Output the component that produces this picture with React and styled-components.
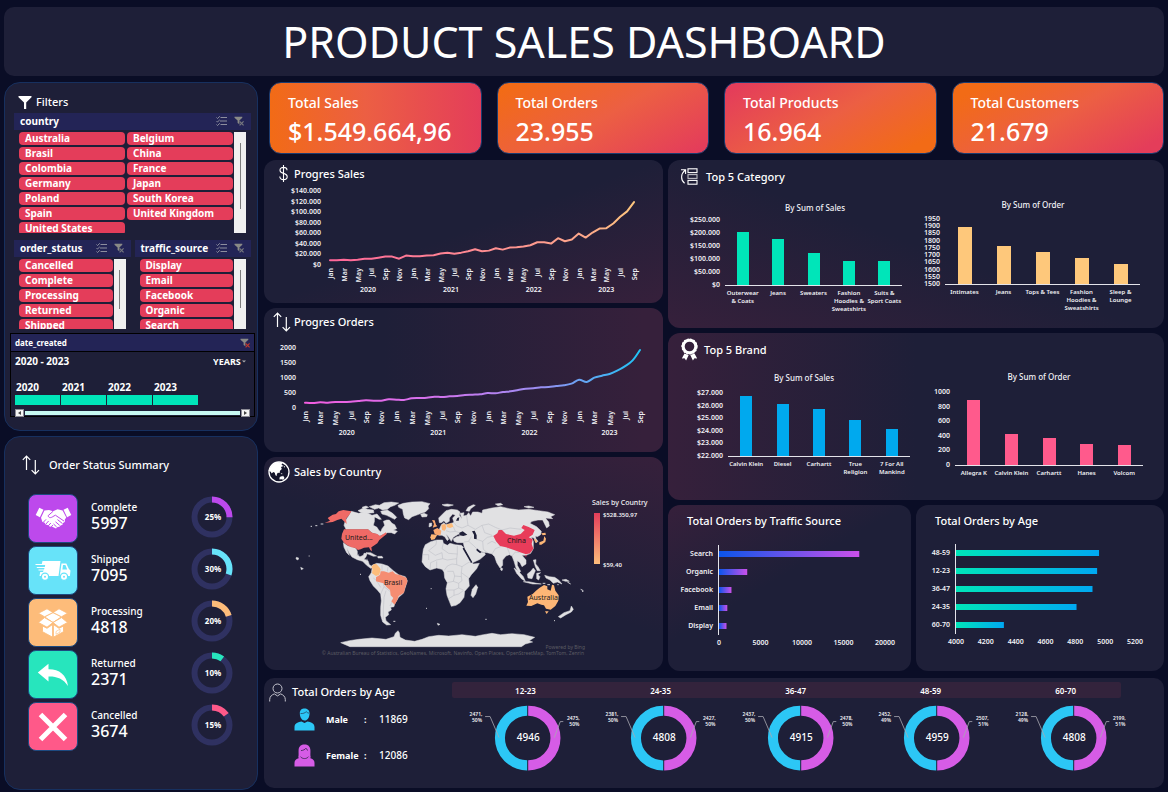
import React from "react";
import styled, { createGlobalStyle } from "styled-components";

const FONT = '"Noto Sans", "Open Sans", sans-serif';
const PANEL = "#1e1f38";
const PLUM = "#36203b";
const NAVY = "#232456";
const RED = "#e43d5a";

const GlobalStyle = createGlobalStyle`
  * { box-sizing: border-box; }
  body { margin: 0; background: #0a0d26; color: #fff; font-family: ${FONT}; }
  button, select { font-family: inherit; color: inherit; }
`;

/* ---------- page frame ---------- */

const Page = styled.div`
  min-height: 100vh;
  padding: 7px 4px 2px;
  display: flex;
  flex-direction: column;
  gap: 6px;
`;

const TitleBar = styled.header`
  height: 69px;
  border-radius: 10px;
  background: ${PANEL};
  display: flex;
  align-items: center;
  justify-content: center;
`;

const PageTitle = styled.h1`
  margin: 0;
  font-size: 43px;
  font-weight: 400;
  line-height: 60px;
`;

const Body = styled.div`
  flex: 1;
  display: grid;
  grid-template-columns: minmax(0, 254fr) minmax(0, 900fr);
  gap: 6px;
`;

const Sidebar = styled.aside`
  display: flex;
  flex-direction: column;
  gap: 5px;
`;

const Main = styled.main`
  display: flex;
  flex-direction: column;
  gap: 6px;
`;

const Columns = styled.div`
  display: grid;
  grid-template-columns: minmax(0, 399fr) minmax(0, 496fr);
  gap: 5px;
`;

const Column = styled.div`
  display: flex;
  flex-direction: column;
  gap: 5px;
`;

const Split = styled.div`
  display: grid;
  grid-template-columns: minmax(0, 243fr) minmax(0, 248fr);
  gap: 5px;
`;

const Panel = styled.section`
  border-radius: 12px;
  background: ${(p) => p.$bg || PANEL};
  overflow: hidden;
`;

const SidePanel = styled.section`
  border: 1px solid #17305f;
  border-radius: 16px;
  background: ${PANEL};
  padding: ${(p) => p.$pad};
  flex-grow: ${(p) => (p.$grow ? 1 : 0)};
`;

const Heading = styled.div`
  display: flex;
  align-items: center;
  gap: ${(p) => p.$gap || 0}px;
  height: ${(p) => p.$h}px;
  padding-left: ${(p) => p.$left || 0}px;
`;

const HeadingText = styled.h2`
  margin: 0;
  font-size: 11px;
  font-weight: 500;
  line-height: 16px;
  white-space: nowrap;
`;

const ChartRow = styled.div`
  display: grid;
  grid-template-columns: minmax(0, 250fr) minmax(0, 246fr);
`;

const Chart = styled.svg`
  display: block;
  width: 100%;
  height: auto;
  text {
    font-family: ${FONT};
    font-size: 7px;
    font-weight: 600;
    fill: #f1f1f5;
  }
  text.name { font-size: 6px; }
  text.title { font-size: 8px; font-weight: 500; }
  text.key { font-weight: 500; }
  text.place { font-size: 7px; font-weight: 400; fill: #1b1b1b; }
  text.credit { font-size: 5px; font-weight: 400; fill: #5c5c63; }
  text.total { font-size: 10px; font-weight: 500; fill: #fff; }
  text.note { font-size: 5px; font-weight: 600; }
`;

/* ---------- KPI cards ---------- */

const KpiRow = styled.div`
  display: grid;
  grid-template-columns: repeat(4, minmax(0, 1fr));
  gap: 15px;
  padding-left: 5px;
`;

const KpiCard = styled.article`
  height: 72px;
  border: 1px solid #1c3c70;
  border-radius: 12px;
  background: ${(p) => p.$bg};
  padding: 9px 18px;
`;

const KpiLabel = styled.div`
  font-size: 14px;
  font-weight: 500;
  line-height: 22px;
`;

const KpiValue = styled.div`
  font-size: 25px;
  font-weight: 500;
  line-height: 34px;
`;

/* ---------- slicers ---------- */

const Slicer = styled.section`
  min-width: 0;
`;

const SlicerHead = styled.div`
  height: 17px;
  background: ${NAVY};
  display: flex;
  align-items: center;
  justify-content: space-between;
  padding: 0 7px 2px 6px;
`;

const SlicerTitle = styled.h3`
  margin: 0;
  font-size: 10px;
  line-height: 14px;
  font-weight: 700;
`;

const SlicerTools = styled.div`
  display: flex;
  gap: 7px;
`;

const ToolButton = styled.button`
  border: 0;
  padding: 0;
  background: none;
  display: flex;
`;

const SlicerBody = styled.div`
  display: grid;
  grid-template-columns: minmax(0, 1fr) 12px;
  gap: 1px;
  height: ${(p) => p.$h}px;
  margin-top: 2px;
  padding: 0 5px;
  overflow: hidden;
`;

const SlicerItems = styled.div`
  display: grid;
  grid-template-columns: repeat(${(p) => p.$cols}, minmax(0, 1fr));
  grid-auto-rows: 13px;
  gap: 2px;
  overflow: hidden;
`;

const SlicerItem = styled.button`
  border: 0;
  border-radius: 4px;
  background: ${RED};
  padding: 0 6px;
  font-size: 10px;
  font-weight: 700;
  line-height: 13px;
  text-align: left;
  white-space: nowrap;
`;

const ScrollTrack = styled.div`
  background: #f0f0f0;
  display: flex;
  justify-content: center;
  padding-top: 11px;
`;

const ScrollThumb = styled.div`
  width: 1px;
  height: ${(p) => p.$h}px;
  background: #7d7d7d;
`;

const SlicerArea = styled.div`
  padding: 0 4px;
`;

const SlicerPair = styled.div`
  display: grid;
  grid-template-columns: 1fr 1fr;
  gap: 4px;
  margin: 7px 0 4px;
`;

const Timeline = styled.section`
  border: 1px solid #000;
  height: 84px;
`;

const TimelineHead = styled.div`
  height: 18px;
  background: ${NAVY};
  border-bottom: 1px solid #000;
  display: flex;
  align-items: center;
  justify-content: space-between;
  padding: 0 4px;
`;

const TimelineTitle = styled.h3`
  margin: 0;
  font-size: 8px;
  font-weight: 700;
`;

const TimelineRange = styled.div`
  display: flex;
  justify-content: space-between;
  align-items: center;
  height: 18px;
  padding: 0 8px 0 4px;
  font-size: 10px;
  font-weight: 700;
`;

const LevelLabel = styled.label`
  display: flex;
  align-items: center;
  gap: 1px;
`;

const LevelSelect = styled.select`
  appearance: none;
  border: 0;
  padding: 0;
  background: none;
  font-size: 9px;
  font-weight: 700;
`;

const YearStrip = styled.div`
  display: flex;
  gap: 1px;
  padding: 10px 4px 0;
`;

const YearCell = styled.button`
  width: 45px;
  border: 0;
  padding: 0 1px;
  background: none;
  font-size: 10px;
  font-weight: 700;
  line-height: 15px;
  text-align: left;
  border-bottom: 10px solid #00e5b9;
`;

const HScroll = styled.div`
  display: flex;
  align-items: center;
  height: 9px;
  margin: 3px 4px 0;
`;

const HScrollButton = styled.button`
  width: 9px;
  height: 8px;
  border: 1px solid #8b8b95;
  padding: 0;
  background: #f4f4f4;
  display: flex;
  align-items: center;
  justify-content: center;
`;

const HScrollTrack = styled.div`
  flex: 1;
  height: 4px;
  margin: 0 1px;
  background: #c6f8f1;
`;

/* ---------- order status ---------- */

const StatusList = styled.ul`
  list-style: none;
  margin: 17px 0 0;
  padding: 0 24px 0 23px;
  display: flex;
  flex-direction: column;
  gap: 4px;
`;

const StatusItem = styled.li`
  display: grid;
  grid-template-columns: 50px minmax(0, 1fr) 42px;
  column-gap: 13px;
  height: 48px;
`;

const StatusTile = styled.div`
  border: 1px solid #1d4a80;
  border-radius: 8px;
  background: ${(p) => p.$color};
  display: flex;
  align-items: center;
  justify-content: center;
`;

const StatusText = styled.div`
  padding-top: 6px;
`;

const StatusName = styled.div`
  font-size: 10px;
  font-weight: 500;
  line-height: 14px;
`;

const StatusCount = styled.div`
  font-size: 16px;
  font-weight: 500;
  line-height: 18px;
`;

const RingBox = styled.div`
  padding-top: 2px;
`;

/* ---------- gender / age panel ---------- */

const AgePanel = styled.section`
  display: grid;
  grid-template-columns: minmax(0, 188fr) minmax(0, 712fr);
  min-height: 110px;
  margin-top: 1px;
  border-radius: 10px;
  background: ${PANEL};
`;

const GenderRow = styled.div`
  display: grid;
  grid-template-columns: 32px 38px 15px 1fr;
  align-items: center;
  height: 26px;
  margin: ${(p) => p.$top}px 0 0 30px;
  font-size: 10px;
  font-weight: 500;
`;

const GenderName = styled.span`
  font-size: 9px;
  font-weight: 700;
`;

const AgeArea = styled.div`
  padding-top: 4px;
`;

const AgeBand = styled.div`
  width: 94%;
  height: 16px;
  border-radius: 2px;
  background: #33233c;
`;

const AgeLabels = styled.div`
  display: grid;
  grid-template-columns: repeat(5, 1fr);
  margin-right: -12px;
  padding-left: 6px;
  font-size: 8px;
  font-weight: 600;
  line-height: 18px;
  text-align: center;
`;

const AgeRings = styled.div`
  display: grid;
  grid-template-columns: repeat(5, minmax(0, 1fr));
  padding: 0 23px 0 7px;
`;

/* ---------- icons ---------- */

const FunnelIcon = () => (
  <svg width="14" height="15" viewBox="0 0 14 15">
    <path d="M0.5 1h13v1.2L8.2 7.400v6.600H6V7.400L0.5 2.200z" fill="#fff" />
  </svg>
);

const MultiIcon = () => (
  <svg width="11" height="10" viewBox="0 0 11 10" fill="none" stroke="#8d8e9e" strokeWidth="1">
    <path d="M4.5 1.5H11M4 5H11M4.5 8.5H11M0.5 1.5l1 1L3.8 0.3M0.5 5l1 1L3.8 3.8M0.5 8.5l1 1L3.8 7.3" />
  </svg>
);

const ClearIcon = ({ color = "#77787f" }) => (
  <svg width="10" height="10" viewBox="0 0 10 10">
    <path d="M0.5 0.8h7.8v1L5.4 4.6v3.6L3.6 7V4.6L0.5 1.8z" fill="#8a8a86" />
    <path d="M5.6 5.4l4 4M9.6 5.4l-4 4" stroke={color} strokeWidth="1.2" />
  </svg>
);

const ArrowsIcon = () => (
  <svg width="18" height="20" viewBox="0 0 18 20" fill="none" stroke="#fff" strokeWidth="1.2">
    <path d="M4.5 15V1.2M0.8 4.8L4.5 1L8.2 4.8M13.3 5v13.8M9.6 15.2l3.7 3.8l3.7-3.8" />
  </svg>
);

const DollarIcon = () => (
  <svg width="9" height="17" viewBox="0 0 9 17" fill="none" stroke="#fff" strokeWidth="1.1">
    <path d="M4.5 0v17M8 5.2C8 3.2 6.6 2.4 4.5 2.4S1 3.4 1 5.3c0 2 1.6 2.6 3.5 3.1S8.2 9.700 8.200 11.700c0 2-1.600 2.900-3.700 2.900S0.800 13.600 0.800 11.600" />
  </svg>
);

const GlobeIcon = () => (
  <svg width="22" height="22" viewBox="0 0 22 22">
    <circle cx="11" cy="11" r="10" fill="#14152b" stroke="#fff" strokeWidth="1.3" />
    <path
      d="M2 7C4 3 8 1 11 1.200l3.500 1-1 1.500 2 1.200-2.500 1 .8 2-1.800 1.800-.4 2.300-1.700-.2-1 1.300-.2 2-1.300-.8-.6-2.600-1.500-.6-1.600 1.500-1-1.900-2.200-1z"
      fill="#fff"
    />
    <path d="M11.500 16.500l1.500-1.300 1.200.4.800-1 1.500 2.400-1.200 1.800-2-.6-1.800.4zM12.500 11.800l2.300 1.200-1.200.3zM15.500 4.500l1.400 1-.3 1.500z" fill="#fff" />
  </svg>
);

const CategoryIcon = () => (
  <svg width="18" height="17" viewBox="0 0 18 17" fill="none" stroke="#fff" strokeWidth="1.1">
    <rect x="8" y="0.800" width="9" height="3.800" />
    <rect x="8" y="6.600" width="9" height="3.800" strokeOpacity="0.7" />
    <rect x="8" y="12.400" width="9" height="3.800" />
    <path d="M4.600 15.200C0.500 12 0.500 6 5.200 2M1 1.800h4.600V6" />
  </svg>
);

const AwardIcon = () => (
  <svg width="17" height="23" viewBox="0 0 17 23">
    <path d="M3.500 15.500L0.800 20.600l2.700-.3 1.600 2.200 2.600-5.500zM13.500 15.500l2.700 5.100-2.700-.3-1.600 2.200-2.600-5.500z" fill="#fff" />
    <circle cx="8.500" cy="8.500" r="6.300" fill="none" stroke="#fff" strokeWidth="3" />
    <circle cx="8.500" cy="8.500" r="7.400" fill="none" stroke="#fff" strokeWidth="1.400" strokeDasharray="2 1.200" />
  </svg>
);

const PersonIcon = () => (
  <svg width="17" height="19" viewBox="0 0 17 19" fill="none" stroke="#c3c3cd" strokeWidth="1">
    <circle cx="8.500" cy="5.500" r="4.500" />
    <path d="M0.700 18.500v-2c0-3 2.300-4.800 4.600-5.600l3.200 2 3.200-2c2.300.8 4.600 2.600 4.600 5.600v2" />
  </svg>
);

const MaleIcon = () => (
  <svg width="21" height="23" viewBox="0 0 21 23">
    <path d="M0.500 22.500v-3.500c0-3.600 4-5 7-5.400l3 1.400 3-1.400c3 .4 7 1.800 7 5.400v3.500z" fill="#2cc7f6" />
    <path d="M5.800 5C5.800 1.800 8 .5 10.600.5s4.900 1.600 4.900 4.700c0 4.200-2 7.300-4.900 7.300S5.800 9.300 5.800 5z" fill="#2cc7f6" />
    <path d="M6.500 5.600c2.600 0 4.700-.6 5.700-2 .6.8 1.600 1.400 2.800 1.600" fill="none" stroke={PANEL} strokeWidth="0.600" />
  </svg>
);

const FemaleIcon = () => (
  <svg width="21" height="23" viewBox="0 0 21 23">
    <path d="M0.500 22.500v-3.500c0-3.200 3-4.700 6-5.200h8c3 .5 6 2 6 5.200v3.500z" fill="#d65ce6" />
    <path d="M4.200 13.500C5 11 4.400 9 4.600 6 4.800 2.300 7.200.5 10.500.5s5.700 1.800 5.900 5.500c.2 3-.4 5 .4 7.500-1.500 1-3 1-4 .4h-4.600c-1 .6-2.500.6-4-.4z" fill="#d65ce6" />
    <path d="M7 6.600c2.200-.2 4-1 5-2.400.4 1.100 1 1.800 2 2.200M6.500 12.600c1.500 2.600 6.500 2.600 8 0" fill="none" stroke={PANEL} strokeWidth="0.700" />
  </svg>
);

const HandshakeIcon = () => (
  <svg width="37" height="23" viewBox="0 0 37 23">
    <path d="M0.700 8L4.300 0.700 8.500 2.700 4.900 10.200zM36.300 8L32.700 0.700 28.500 2.700 32.100 10.200z" fill="#fff" />
    <path
      d="M9.400 3.600L14 3l4 1.200 4.600-2 5 1.400 3.700 7-1.500 2 .2 2.200-1.900 1.200-.6 1.800-2 .6-1 1.400-2 .2-1.500 1.500-3.200-1.500-3.200-.5-2-1.500-2-.5-1.200-2-2-.5-1.400-4.200z"
      fill="#fff"
    />
    <path
      d="M18.200 4.200L13.200 8.600c.2 2.400 2.600 2.600 4.800.9l2.400-1.300 8.800 6M22.500 12.600l5 4M20.500 14.800l4.200 3.600M18.500 17l3.200 3M8.200 15.400l2.800-3M10.600 17.400l3-3.400M13.200 19l2.600-3M16 20.400l1.800-2.400"
      fill="none"
      stroke="#bd49ec"
      strokeWidth="1"
    />
  </svg>
);

const TruckIcon = () => (
  <svg width="36" height="21" viewBox="0 0 36 21" fill="#fff">
    <path d="M7.500 1H25.500L23.500 16H4.500L5.200 12H8L8.600 10.600H3.500V9.600H9L9.500 8H1.800V7H9.800L10.200 5H0.500V4H6.800z" />
    <path fillRule="evenodd" d="M26.500 3.500h4.800l2.600 5.600 1.600 1.400-.6 5.500H24.800zM28 5l-.6 4.400h4.800L30.400 5z" />
    <g stroke="#67e3f9" strokeWidth="1.200">
      <circle cx="10" cy="16.800" r="3.600" />
      <circle cx="29" cy="16.800" r="3.600" />
    </g>
    <circle cx="10" cy="16.800" r="1" fill="#67e3f9" />
    <circle cx="29" cy="16.800" r="1" fill="#67e3f9" />
  </svg>
);

const BoxIcon = () => (
  <svg width="30" height="30" viewBox="0 0 30 30" fill="#fff" stroke="#fdbc7a" strokeWidth="0.900">
    <path d="M15 4.500L23.500 8.800 15 14.500 6.500 8.800z" />
    <path d="M15 4.500L9 0.800 0.500 5.200 6.500 8.800zM15 4.500L21 0.800l8.500 4.400-6 3.600z" />
    <path d="M6.500 9.600L0.500 14.500l8.500 4.700 6-4.700zM23.500 9.600l6 4.900-8.500 4.700-6-4.700z" />
    <path d="M4.500 18l4.500 2.300 5.600-3.800V29.200L4.500 23.700zM25.500 18L21 20.300l-5.600-3.800V29.200l10.100-5.500z" />
    <path d="M18 23.500l4-2.400v3l-4 2.200z" strokeWidth="0.600" />
  </svg>
);

const ReplyIcon = () => (
  <svg width="32" height="24" viewBox="0 0 32 24">
    <path d="M0.800 9.500L11.500 0.800v5.400C22 6 29.500 11.500 31 23 26.500 15.500 19.500 13.200 11.500 13.400v5.200z" fill="#fff" />
  </svg>
);

const CrossIcon = () => (
  <svg width="30" height="30" viewBox="0 0 30 30">
    <path d="M2.500 2.500l25 25M27.500 2.500l-25 25" stroke="#fff" strokeWidth="5" />
  </svg>
);

/* ---------- charts ---------- */

const MONTHS = ["Jan", "Mar", "May", "Jul", "Sep", "Nov"];
const YEARS = [
  ["2020", 5.5],
  ["2021", 17.5],
  ["2022", 29.5],
  ["2023", 40],
];

const SALES = [
  7, 7, 8.2, 7, 8.2, 10, 10, 12, 14, 14, 10, 16, 14.6, 14.6, 16, 16.5, 20, 21.5, 19.6, 21.5, 24, 28, 24, 25.3, 29.8,
  27.2, 31, 31.7, 33, 35.5, 41.2, 41.2, 38.6, 48.8, 43, 46.2, 57.6, 50, 59.5, 67, 67.8, 76.6, 89.3, 99.5, 117.2,
];
const ORDERS = [
  144, 133, 155, 144, 167, 167, 178, 200, 222, 211, 211, 255, 244, 233, 289, 300, 311, 344, 333, 355, 367, 400, 411,
  422, 467, 455, 500, 522, 567, 611, 622, 655, 667, 700, 722, 778, 911, 833, 978, 1044, 1100, 1211, 1355, 1544, 1900,
];

const toPath = (pts, smooth) => {
  if (!smooth) return "M" + pts.map((p) => p.join(",")).join("L");
  let d = `M${pts[0]}`;
  for (let i = 0; i < pts.length - 1; i++) {
    const a = pts[Math.max(i - 1, 0)];
    const b = pts[i];
    const c = pts[i + 1];
    const e = pts[Math.min(i + 2, pts.length - 1)];
    d += `C${b[0] + (c[0] - a[0]) / 6},${b[1] + (c[1] - a[1]) / 6} ${c[0] - (e[0] - b[0]) / 6},${c[1] - (e[1] - b[1]) / 6} ${c}`;
  }
  return d;
};

function LineChart({ id, label, h, x0, x1, top, base, max, ticks, tickX, data, colors, smooth }) {
  const step = (x1 - x0) / (data.length - 1);
  const y = (v) => base - ((base - top) * v) / max;
  const pts = data.map((v, i) => [x0 + i * step, y(v)]);
  return (
    <Chart viewBox={`0 0 399 ${h}`} role="img" aria-label={label}>
      <defs>
        <linearGradient id={id} gradientUnits="userSpaceOnUse" x1={x0} x2={x1} y1="0" y2="0">
          {colors.map(([o, c]) => (
            <stop key={o} offset={o} stopColor={c} />
          ))}
        </linearGradient>
      </defs>
      {ticks.map(([t, v]) => (
        <text key={t} x={tickX} y={y(v) + 3} textAnchor="end">
          {t}
        </text>
      ))}
      <path d={toPath(pts, smooth)} fill="none" stroke={`url(#${id})`} strokeWidth="2" strokeLinejoin="round" strokeLinecap="round" />
      {data.map((_, i) =>
        i % 2 ? null : (
          <text key={i} textAnchor="end" transform={`translate(${x0 + i * step + 3} ${base + 4}) rotate(-90)`}>
            {MONTHS[(i / 2) % 6]}
          </text>
        )
      )}
      {YEARS.map(([t, i]) => (
        <text key={t} x={x0 + i * step} y={base + 28} textAnchor="middle">
          {t}
        </text>
      ))}
    </Chart>
  );
}

function BarChart({ w, h, title, titleX, titleY, x0, x1, top, base, min, max, ticks, bars, color, barW }) {
  const pitch = (x1 - x0) / bars.length;
  const y = (v) => base - ((base - top) * (v - min)) / (max - min);
  return (
    <Chart viewBox={`0 0 ${w} ${h}`} role="img" aria-label={title}>
      <text className="title" x={titleX} y={titleY} textAnchor="middle">
        {title}
      </text>
      {ticks.map(([t, v]) => (
        <text key={t} x={x0 - 5} y={y(v) + 2} textAnchor="end">
          {t}
        </text>
      ))}
      {bars.map(([lines, v], i) => {
        const cx = x0 + pitch * (i + 0.5);
        return (
          <g key={i}>
            <rect x={Math.round(cx - barW / 2)} y={Math.round(y(v))} width={barW} height={base - Math.round(y(v))} fill={color} />
            {lines.map((line, n) => (
              <text key={n} className="name" x={cx} y={base + 10 + n * 8} textAnchor="middle">
                {line}
              </text>
            ))}
          </g>
        );
      })}
      <path d={`M${x0} ${base + 0.5}H${x1}`} stroke="#e4e4ea" />
    </Chart>
  );
}

function HBarChart({ id, label, w, h, x0, x1, top, pitch, min, max, ticks, bars, colors }) {
  const x = (v) => x0 + ((x1 - x0) * (v - min)) / (max - min);
  const bottom = top + pitch * bars.length;
  return (
    <Chart viewBox={`0 0 ${w} ${h}`} role="img" aria-label={label}>
      <defs>
        <linearGradient id={id}>
          <stop offset="0" stopColor={colors[0]} />
          <stop offset="1" stopColor={colors[1]} />
        </linearGradient>
      </defs>
      {bars.map(([t, v], i) => {
        const cy = top + pitch * (i + 0.5);
        return (
          <g key={t}>
            <text x={x0 - 6} y={cy + 2} textAnchor="end">
              {t}
            </text>
            <rect x={x0} y={cy - 3} width={x(v) - x0} height="6" fill={`url(#${id})`} />
          </g>
        );
      })}
      <path d={`M${x0 - 0.5} ${top}V${bottom}`} stroke="#e4e4ea" />
      {ticks.map((t) => (
        <text key={t} x={x(t)} y={bottom + 10} textAnchor="middle">
          {t}
        </text>
      ))}
    </Chart>
  );
}

function StatusRing({ percent, color }) {
  const len = 2 * Math.PI * 17.5;
  return (
    <RingBox>
      <svg width="42" height="42" viewBox="0 0 42 42" role="img" aria-label={`${percent}%`}>
        <circle cx="21" cy="21" r="17.500" fill="none" stroke="#2f3161" strokeWidth="6" />
        <circle
          cx="21"
          cy="21"
          r="17.500"
          fill="none"
          stroke={color}
          strokeWidth="6"
          strokeDasharray={`${(len * percent) / 100} ${len}`}
          transform="rotate(-90 21 21)"
        />
        <text x="22" y="24" textAnchor="middle" fill="#fff" fontSize="8" fontWeight="700" fontFamily={FONT}>
          {percent}%
        </text>
      </svg>
    </RingBox>
  );
}

function AgeRing({ total, male, female }) {
  return (
    <Chart viewBox="0 0 136 84" role="img" aria-label={`${total} orders`}>
      <path d="M68 12.800A27.200 27.200 0 0 0 68 67.200" fill="none" stroke="#2cc7f6" strokeWidth="10" />
      <path d="M69 12.800A27.200 27.200 0 0 1 69 67.200" fill="none" stroke="#d65ce6" strokeWidth="10" />
      <path d="M26 18.500h5l9 21M104 23.500h-3l-6 16" fill="none" stroke="#a9a9b2" strokeWidth="0.800" />
      <text className="total" x="69" y="43" textAnchor="middle">
        {total}
      </text>
      <text className="note" x="17" y="18" textAnchor="middle">{male[0]},</text>
      <text className="note" x="18" y="24" textAnchor="middle">{male[1]}</text>
      <text className="note" x="114" y="22" textAnchor="middle">{female[0]},</text>
      <text className="note" x="115" y="28" textAnchor="middle">{female[1]}</text>
    </Chart>
  );
}

/* ---------- world map ---------- */

const LAND = [
  "268,172 290,178 310,174 330,184 345,180 352,188 358,196 345,196 336,206 334,214 345,220 350,228 356,234 360,224 368,214 364,202 374,198 382,198 390,208 398,212 404,224 394,228 406,232 398,240 388,236 376,236 368,240 352,246 344,240 330,236 318,226 252,226 246,214 250,200 258,188",
  "288,170 304,162 316,166 334,168 336,176 318,178 298,176",
  "322,158 340,152 352,154 366,146 388,144 410,147 398,154 386,158 376,166 362,168 350,162 338,166",
  "356,172 376,168 392,178 404,190 398,196 386,190 374,184 360,180",
  "300,160 312,156 320,160 308,164",
  "408,154 424,148 450,144 480,143 504,149 498,156 500,164 490,174 478,178 462,184 450,188 440,197 428,192 424,180 422,166 410,160",
  "476,181 486,178 496,182 494,188 480,189",
  "244,266 258,276 274,280 282,284 286,292 286,302 294,308 304,304 306,298 316,298 312,308 306,316 318,320 322,332 330,337 336,340 326,343 314,334 302,322 286,317 270,309 262,298 254,281 262,304 254,296 246,280",
  "312,296 326,296 344,306 334,307 318,300",
  "347,307 360,307 363,312 348,312",
  "330,334 344,328 360,330 378,336 394,350 410,362 430,368 436,380 430,400 424,418 410,430 398,450 396,458 386,460 388,468 378,474 380,482 370,490 372,500 386,512 374,513 362,504 356,484 356,460 358,440 356,420 346,408 334,396 324,380 320,368 328,356 330,344",
  "490,272 506,263 524,258 542,258 544,268 556,274 564,268 580,272 598,274 604,280 616,304 626,322 634,330 652,328 644,344 628,362 620,374 622,396 608,412 606,430 594,446 582,454 568,457 562,442 555,424 552,404 556,386 548,372 546,354 540,346 524,342 504,348 490,338 480,324 482,302 484,286",
  "642,392 647,400 641,420 633,431 627,424 631,406",
  "502,208 509,207 509,216 501,219",
  "532,206 530,192 542,180 552,170 568,166 586,168 594,174 592,184 600,194 586,202 574,200 572,192 580,184 572,180 562,192 562,202 552,208 546,200 538,206",
  "538,212 546,206 552,212 574,206 576,200 600,194 594,178 606,176 604,186 614,184 620,176 626,186 632,174 648,174 660,178 662,168 690,162 716,158 742,164 770,168 800,166 830,170 858,174 878,182 866,188 872,194 850,192 860,204 862,216 854,222 846,206 842,198 828,198 810,202 804,208 824,218 838,232 836,242 826,248 820,246 822,254 828,262 822,266 816,252 808,250 814,262 814,284 806,298 792,304 780,304 792,318 792,330 780,338 774,326 766,320 766,334 776,352 772,356 762,342 756,322 750,306 742,302 732,306 722,318 722,334 714,342 704,326 698,308 690,300 676,296 662,294 652,290 644,282 648,294 668,296 670,302 654,316 630,327 620,308 608,286 606,276 604,266 586,266 576,262 574,254 584,248 594,246 590,240 580,246 574,250 568,262 560,250 552,240 560,256 556,260 548,248 540,244 530,244 532,226",
  "756,342 768,350 784,368 790,382 778,374 764,358",
  "784,383 800,383 824,388 838,390 812,390",
  "796,360 806,352 814,342 820,350 814,364 810,374 798,372",
  "824,358 836,356 828,362 834,368 830,378 824,374",
  "814,318 822,317 821,330 828,338 835,350 826,350 820,338",
  "848,364 862,368 878,370 890,378 900,390 886,384 874,388 864,378 852,372",
  "900,378 912,376 922,382 910,382",
  "716,340 722,344 720,350 716,348",
  "928,456 934,466 928,474 912,482 896,492 889,488 906,476 924,470",
  "236,566 262,560 290,556 330,552 372,556 396,548 400,538 408,530 412,536 414,550 430,558 458,562 480,556 500,548 530,544 560,546 600,542 640,547 664,542 690,538 716,542 750,539 786,542 818,550 802,560 812,564 790,570 778,578 264,578",
  "540,152 556,150 574,153 560,157 548,156",
  "612,170 618,160 634,152 640,154 626,164 622,172",
  "700,150 716,148 722,152 708,155",
  "786,158 800,156 816,160 800,162",
  "103,310 110,312 108,318 102,315",
  "116,340 124,344 118,347",
  "526,508 534,511 528,514",
  "836,178 846,184 852,196 846,200 840,188",
];

const TINTED = [
  ["#ef6a66", "197,192 212,182 222,180 230,172 244,168 268,172 262,182 252,194 254,210 246,202 238,194 226,198 212,204 188,207 204,200"],
  ["#ef6a66", "246,226 318,226 330,236 346,240 354,246 372,235 374,240 362,250 352,258 346,268 334,276 328,280 330,292 325,288 321,280 306,281 296,286 288,288 280,282 268,280 256,274 246,266 238,254 240,240"],
  ["#fdbd7b", "336,330 343,330 352,340 356,346 352,362 342,366 330,358 332,346 328,338"],
  ["#f58d72", "342,382 342,370 354,362 356,352 366,352 380,356 392,352 400,360 416,364 434,372 436,384 430,398 426,416 410,426 406,438 398,452 388,442 394,432 386,424 384,408 374,400 364,388"],
  ["#e83c5a", "694,246 706,238 710,228 720,228 732,240 756,245 776,240 788,228 778,222 784,213 800,219 818,228 812,242 800,250 812,256 809,270 814,284 804,298 792,301 772,294 756,288 732,280 714,276 702,262"],
  ["#e83c5a", "788,304 794,304 792,309"],
  ["#fdb676", "508,241 526,242 518,256 508,258 505,250"],
  ["#fba970", "514,228 526,222 538,230 536,242 526,244 518,240"],
  ["#fdb676", "538,212 550,210 553,222 548,230 540,228"],
  ["#fdbd7b", "554,211 570,208 574,218 564,222 554,219"],
  ["#fba970", "510,198 518,199 522,212 526,217 512,221 516,210"],
  ["#fdb676", "838,238 850,236 852,242 842,244"],
  ["#fdb676", "847,246 852,254 850,264 838,272 832,272 832,265 844,260"],
  ["#fdb676", "816,256 822,256 826,264 820,266"],
  ["#fdb676", "796,428 812,420 822,410 832,402 846,393 856,397 856,406 866,410 870,392 876,394 880,410 890,424 889,440 880,456 866,467 852,464 846,454 838,452 826,448 808,456 793,455 798,444"],
  ["#fdb676", "849,472 860,472 854,480"],
];

const SEAS = [
  "592,236 602,232 616,242 604,246 592,244",
  "630,232 638,230 644,244 644,256 636,254 636,242",
  "338,190 350,196 348,204 338,206",
  "586,192 592,190 590,200 582,200",
];

const BORDERS =
  "M524 258L522 272 500 290M544 268L540 284 560 298 586 300 586 276M500 290L520 304 540 296M482 302H500V318M540 296L542 314 556 318 584 314 586 300M504 346L506 326 524 318 542 314M524 342V322M546 350L556 336 570 330 584 332 584 314M584 332L600 338 612 330 626 322M600 338L598 356 620 372M556 352L574 352 578 366 574 382 556 386M578 366L598 368 598 356M574 382L590 388 600 380 598 368M554 408L576 408 590 402 590 388M576 408V424L560 434M576 424L590 420 604 410M590 402L604 408M614 186L618 214 600 222 584 216 576 206M618 214L640 226 660 214 680 210 700 220 720 228M660 214L668 236 690 244M644 256L662 262 676 250 694 246M662 262L664 286 676 296M676 270L690 262 702 268M720 228L744 222 778 226M690 300L700 284 716 278M736 282L744 302M606 264L620 262 628 248M620 262L634 274 644 284M750 306L760 294 772 296M574 218L580 232 564 234 552 230M580 232L592 236M356 420L366 398 364 388M366 398L384 412M366 430L372 410M366 430L364 470 364 496M392 440L384 456M334 372L344 380 356 400M360 350V332M376 352L378 338M386 354L388 346M284 304L292 300M308 316L318 316";

function WorldMap() {
  return (
    <Chart viewBox="0 0 399 184" role="img" aria-label="Sales by Country">
      <defs>
        <linearGradient id="legend" x2="0" y2="1">
          <stop offset="0" stopColor={RED} />
          <stop offset="1" stopColor="#fdbd7b" />
        </linearGradient>
      </defs>
      <svg x="0" y="0" width="399" height="184" viewBox="6 96 1197 552">
        <g fill="#e1e1e3" stroke="#e1e1e3" strokeWidth="1.500" strokeLinejoin="round">
          {LAND.map((p, i) => (
            <polygon key={i} points={p} />
          ))}
        </g>
        {SEAS.map((p, i) => (
          <polygon key={i} points={p} fill={PANEL} />
        ))}
        <path d="M604 282L629 326M644 286L656 296" stroke={PANEL} strokeWidth="5" fill="none" />
        <path d={BORDERS} stroke="#b9bac2" strokeWidth="1.500" fill="none" />
        {TINTED.map(([c, p], i) => (
          <polygon key={i} points={p} fill={c} />
        ))}
        <path
          d="M146 217h4M160 215h6M176 210h8M140 306h3M294 361h3M506 404h3M492 463h3M670 496h4M394 502h6M886 392h4M916 384l10 6M956 406l8 4M960 412h4M876 500h3M842 388h8M856 392h8"
          stroke="#d3d3d8"
          strokeWidth="3"
        />
      </svg>
      <text className="place" x="81" y="54">United...</text>
      <text className="place" x="243" y="57">China</text>
      <text className="place" x="120" y="99">Brasil</text>
      <text className="place" x="265" y="114">Australia</text>
      <text className="key" x="328" y="19">Sales by Country</text>
      <rect x="330" y="27" width="6" height="51" fill="url(#legend)" />
      <text className="name" x="339" y="31">$528.350,97</text>
      <text className="name" x="339" y="81">$59,40</text>
      <text className="credit" x="321" y="163" textAnchor="end">Powered by Bing</text>
      <text className="credit" x="320" y="169" textAnchor="end">
        © Australian Bureau of Statistics, GeoNames, Microsoft, Navinfo, Open Places, OpenStreetMap, TomTom, Zenrin
      </text>
    </Chart>
  );
}

/* ---------- content ---------- */

const KPIS = [
  ["Total Sales", "$1.549.664,96", "linear-gradient(90deg, #f26b16, #ec5f43 45%, #e43d5a)"],
  ["Total Orders", "23.955", "linear-gradient(150deg, #f26b16 5%, #ec5f43 50%, #e43d5a 95%)"],
  ["Total Products", "16.964", "linear-gradient(150deg, #e43d5a 5%, #ec5f43 50%, #f26b16 90%)"],
  ["Total Customers", "21.679", "linear-gradient(150deg, #f26b16 10%, #ec5f43 50%, #e43d5a 92%)"],
];

const COUNTRIES = [
  "Australia", "Belgium", "Brasil", "China", "Colombia", "France", "Germany", "Japan", "Poland", "South Korea", "Spain",
  "United Kingdom", "United States",
];

const STATUSES = [
  ["Complete", 5997, 25, "#bd49ec", <HandshakeIcon key="i" />],
  ["Shipped", 7095, 30, "#67e3f9", <TruckIcon key="i" />],
  ["Processing", 4818, 20, "#fdbc7a", <BoxIcon key="i" />],
  ["Returned", 2371, 10, "#27e5bd", <ReplyIcon key="i" />],
  ["Cancelled", 3674, 15, "#ff5989", <CrossIcon key="i" />],
];

const AGES = [
  ["12-23", 4946, ["2471", "50%"], ["2475", "50%"]],
  ["24-35", 4808, ["2381", "50%"], ["2427", "50%"]],
  ["36-47", 4915, ["2437", "50%"], ["2478", "50%"]],
  ["48-59", 4959, ["2452", "49%"], ["2507", "51%"]],
  ["60-70", 4808, ["2128", "49%"], ["2199", "51%"]],
];

function SlicerBox({ name, items, cols = 1, height, thumb }) {
  return (
    <Slicer>
      <SlicerHead>
        <SlicerTitle>{name}</SlicerTitle>
        <SlicerTools>
          <ToolButton type="button" aria-label="Multi-select"><MultiIcon /></ToolButton>
          <ToolButton type="button" aria-label="Clear filter"><ClearIcon /></ToolButton>
        </SlicerTools>
      </SlicerHead>
      <SlicerBody $h={height}>
        <SlicerItems $cols={cols}>
          {items.map((t) => (
            <SlicerItem type="button" key={t}>{t}</SlicerItem>
          ))}
        </SlicerItems>
        <ScrollTrack>
          <ScrollThumb $h={thumb} />
        </ScrollTrack>
      </SlicerBody>
    </Slicer>
  );
}

export default function App() {
  return (
    <Page>
      <GlobalStyle />
      <TitleBar>
        <PageTitle>PRODUCT SALES DASHBOARD</PageTitle>
      </TitleBar>
      <Body>
        <Sidebar>
          <SidePanel $pad="8px 2px 13px 5px">
            <Heading $h={22} $left={8} $gap={4}>
              <FunnelIcon />
              <HeadingText>Filters</HeadingText>
            </Heading>
            <SlicerArea>
              <SlicerBox name="country" items={COUNTRIES} cols={2} height={101} thumb={66} />
              <SlicerPair>
                <SlicerBox name="order_status" items={["Cancelled", "Complete", "Processing", "Returned", "Shipped"]} height={70} thumb={39} />
                <SlicerBox name="traffic_source" items={["Display", "Email", "Facebook", "Organic", "Search"]} height={70} thumb={38} />
              </SlicerPair>
            </SlicerArea>
            <Timeline>
              <TimelineHead>
                <TimelineTitle>date_created</TimelineTitle>
                <ToolButton type="button" aria-label="Clear filter"><ClearIcon color="#c0392b" /></ToolButton>
              </TimelineHead>
              <TimelineRange>
                <span>2020 - 2023</span>
                <LevelLabel>
                  <LevelSelect aria-label="Time level" defaultValue="YEARS">
                    <option>YEARS</option>
                  </LevelSelect>
                  <svg width="4" height="3" viewBox="0 0 4 3"><path d="M0 0.500h4L2 2.500z" fill="#aaa" /></svg>
                </LevelLabel>
              </TimelineRange>
              <YearStrip>
                {YEARS.map(([y]) => (
                  <YearCell type="button" key={y}>{y}</YearCell>
                ))}
              </YearStrip>
              <HScroll>
                <HScrollButton type="button" aria-label="Scroll left">
                  <svg width="3" height="4" viewBox="0 0 3 4"><path d="M3 0v4L0 2z" fill="#444" /></svg>
                </HScrollButton>
                <HScrollTrack />
                <HScrollButton type="button" aria-label="Scroll right">
                  <svg width="3" height="4" viewBox="0 0 3 4"><path d="M0 0v4L3 2z" fill="#444" /></svg>
                </HScrollButton>
              </HScroll>
            </Timeline>
          </SidePanel>
          <SidePanel $pad="16px 0 0" $grow>
            <Heading $h={24} $left={17} $gap={9}>
              <ArrowsIcon />
              <HeadingText>Order Status Summary</HeadingText>
            </Heading>
            <StatusList>
              {STATUSES.map(([name, count, pct, color, icon]) => (
                <StatusItem key={name}>
                  <StatusTile $color={color}>{icon}</StatusTile>
                  <StatusText>
                    <StatusName>{name}</StatusName>
                    <StatusCount>{count}</StatusCount>
                  </StatusText>
                  <StatusRing percent={pct} color={color} />
                </StatusItem>
              ))}
            </StatusList>
          </SidePanel>
        </Sidebar>

        <Main>
          <KpiRow>
            {KPIS.map(([label, value, bg]) => (
              <KpiCard key={label} $bg={bg}>
                <KpiLabel>{label}</KpiLabel>
                <KpiValue>{value}</KpiValue>
              </KpiCard>
            ))}
          </KpiRow>

          <Columns>
            <Column>
              <Panel $bg={`linear-gradient(160deg, ${PANEL} 50%, ${PLUM})`}>
                <Heading $h={27} $left={15} $gap={6}>
                  <DollarIcon />
                  <HeadingText>Progres Sales</HeadingText>
                </Heading>
                <LineChart
                  id="salesLine" label="Progres Sales" h={116} x0={66} x1={370} top={3} base={77} max={140} tickX={57} data={SALES}
                  colors={[[0, "#ff6699"], [0.6, "#ff9490"], [0.85, "#fda98a"], [1, "#fdc67d"]]}
                  ticks={[0, 20, 40, 60, 80, 100, 120, 140].map((v) => [v ? `$${v}.000` : "$0", v])}
                />
              </Panel>
              <Panel $bg={`linear-gradient(90deg, ${PANEL} 30%, ${PLUM} 95%)`}>
                <Heading $h={28} $left={9} $gap={3}>
                  <ArrowsIcon />
                  <HeadingText>Progres Orders</HeadingText>
                </Heading>
                <LineChart
                  id="ordersLine" label="Progres Orders" h={116} x0={41} x1={376} top={11} base={71} max={2000} tickX={32} data={ORDERS} smooth
                  colors={[[0, "#f35de0"], [0.4, "#d274ee"], [0.7, "#9b8ef2"], [1, "#1fc3f5"]]}
                  ticks={[0, 500, 1000, 1500, 2000].map((v) => [String(v), v])}
                />
              </Panel>
              <Panel $bg={`linear-gradient(200deg, ${PLUM}, ${PANEL} 50%)`}>
                <Heading $h={29} $left={4} $gap={4}>
                  <GlobeIcon />
                  <HeadingText>Sales by Country</HeadingText>
                </Heading>
                <WorldMap />
              </Panel>
            </Column>

            <Column>
              <Panel $bg={`linear-gradient(20deg, ${PLUM}, ${PANEL} 50%)`}>
                <Heading $h={33} $left={12} $gap={8}>
                  <CategoryIcon />
                  <HeadingText>Top 5 Category</HeadingText>
                </Heading>
                <ChartRow>
                  <BarChart
                    w={250} h={135} title="By Sum of Sales" titleX={147} titleY={18} x0={57} x1={234} top={27} base={92} min={0} max={250}
                    color="#00e5b9" barW={12}
                    ticks={[0, 50, 100, 150, 200, 250].map((v) => [v ? `$${v}.000` : "$0", v])}
                    bars={[
                      [["Outerwear", "& Coats"], 203],
                      [["Jeans"], 176],
                      [["Sweaters"], 122],
                      [["Fashion", "Hoodies &", "Sweatshirts"], 91],
                      [["Suits &", "Sport Coats"], 91],
                    ]}
                  />
                  <BarChart
                    w={246} h={135} title="By Sum of Order" titleX={115} titleY={15} x0={27} x1={222} top={26} base={91} min={1500} max={1950}
                    color="#fec87b" barW={14}
                    ticks={[1500, 1550, 1600, 1650, 1700, 1750, 1800, 1850, 1900, 1950].map((v) => [String(v), v])}
                    bars={[
                      [["Intimates"], 1893],
                      [["Jeans"], 1763],
                      [["Tops & Tees"], 1722],
                      [["Fashion", "Hoodies &", "Sweatshirts"], 1681],
                      [["Sleep &", "Lounge"], 1640],
                    ]}
                  />
                </ChartRow>
              </Panel>
              <Panel $bg={`linear-gradient(90deg, ${PLUM}, ${PANEL} 50%)`}>
                <Heading $h={33} $left={13} $gap={6}>
                  <AwardIcon />
                  <HeadingText>Top 5 Brand</HeadingText>
                </Heading>
                <ChartRow>
                  <BarChart
                    w={250} h={134} title="By Sum of Sales" titleX={136} titleY={15} x0={60} x1={242} top={27} base={90} min={22} max={27}
                    color="#00a9ee" barW={12}
                    ticks={[22, 23, 24, 25, 26, 27].map((v) => [`$${v}.000`, v])}
                    bars={[
                      [["Calvin Klein"], 26.75],
                      [["Diesel"], 26.1],
                      [["Carhartt"], 25.7],
                      [["True", "Religion"], 24.85],
                      [["7 For All", "Mankind"], 24.15],
                    ]}
                  />
                  <BarChart
                    w={246} h={134} title="By Sum of Order" titleX={121} titleY={14} x0={37} x1={225} top={26} base={99} min={0} max={1000}
                    color="#ff5a8c" barW={13}
                    ticks={[0, 200, 400, 600, 800, 1000].map((v) => [String(v), v])}
                    bars={[
                      [["Allegra K"], 890],
                      [["Calvin Klein"], 425],
                      [["Carhartt"], 370],
                      [["Hanes"], 290],
                      [["Volcom"], 274],
                    ]}
                  />
                </ChartRow>
              </Panel>
              <Split>
                <Panel $bg={`linear-gradient(150deg, ${PLUM}, ${PANEL} 45%)`}>
                  <Heading $h={31} $left={19}>
                    <HeadingText>Total Orders by Traffic Source</HeadingText>
                  </Heading>
                  <HBarChart
                    id="trafficBar" label="Total Orders by Traffic Source" w={243} h={135} x0={51} x1={217} top={9} pitch={18} min={0} max={20000}
                    colors={["#0b55ea", "#cb50ea"]} ticks={[0, 5000, 10000, 15000, 20000]}
                    bars={[["Search", 16900], ["Organic", 3400], ["Facebook", 1500], ["Email", 1000], ["Display", 900]]}
                  />
                </Panel>
                <Panel>
                  <Heading $h={31} $left={19}>
                    <HeadingText>Total Orders by Age</HeadingText>
                  </Heading>
                  <HBarChart
                    id="ageBar" label="Total Orders by Age" w={248} h={135} x0={40} x1={219} top={8} pitch={18} min={4000} max={5200}
                    colors={["#00e5b9", "#00a8f2"]} ticks={[4000, 4200, 4400, 4600, 4800, 5000, 5200]}
                    bars={[["48-59", 4959], ["12-23", 4946], ["36-47", 4915], ["24-35", 4808], ["60-70", 4321]]}
                  />
                </Panel>
              </Split>
            </Column>
          </Columns>

          <AgePanel>
            <div>
              <Heading $h={28} $left={5} $gap={6}>
                <PersonIcon />
                <HeadingText>Total Orders by Age</HeadingText>
              </Heading>
              <GenderRow $top={0}>
                <MaleIcon />
                <GenderName>Male</GenderName>
                <GenderName>:</GenderName>
                <span>11869</span>
              </GenderRow>
              <GenderRow $top={10}>
                <FemaleIcon />
                <GenderName>Female</GenderName>
                <GenderName>:</GenderName>
                <span>12086</span>
              </GenderRow>
            </div>
            <AgeArea>
              <AgeBand>
                <AgeLabels>
                  {AGES.map(([age]) => (
                    <span key={age}>{age}</span>
                  ))}
                </AgeLabels>
              </AgeBand>
              <AgeRings>
                {AGES.map(([age, total, male, female]) => (
                  <AgeRing key={age} total={total} male={male} female={female} />
                ))}
              </AgeRings>
            </AgeArea>
          </AgePanel>
        </Main>
      </Body>
    </Page>
  );
}
